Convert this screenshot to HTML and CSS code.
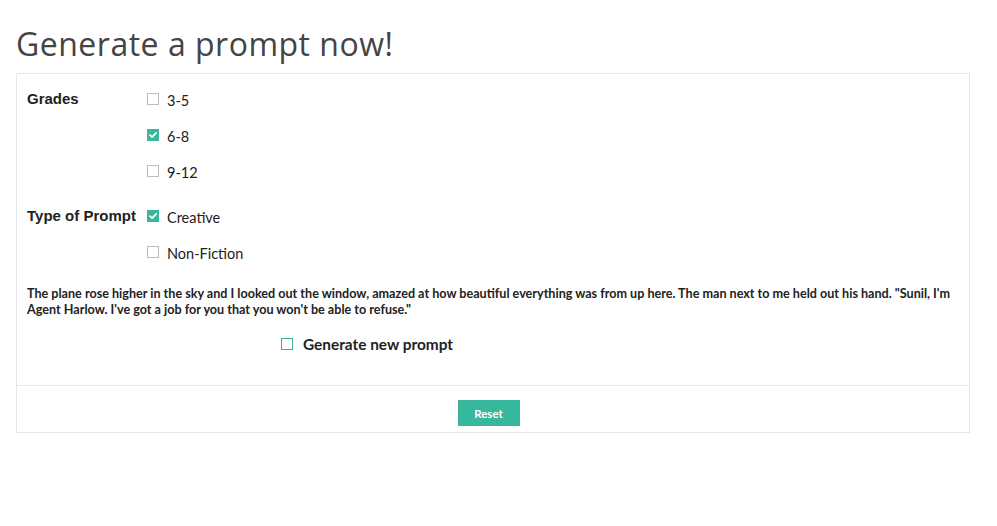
FILE: index.html
```html
<!DOCTYPE html>
<html>
<head>
<meta charset="utf-8">
<link rel="stylesheet" href="styles.css">
</head>
<body>
<div class="page">
  <h1 class="title">Generate a prompt now!</h1>
  <div class="panel">
    <div class="panel-body">
      <div class="group">
        <div class="group-label">Grades</div>
        <div class="options">
          <label class="option"><span class="box"></span><span class="opt-text">3-5</span></label>
          <label class="option"><span class="box checked"><svg viewBox="0 0 12 12" width="12" height="12"><path d="M3 6.2 L5.1 8.2 L9.2 3.9" fill="none" stroke="#fff" stroke-width="1.8" stroke-linecap="round" stroke-linejoin="round"/></svg></span><span class="opt-text">6-8</span></label>
          <label class="option"><span class="box"></span><span class="opt-text">9-12</span></label>
        </div>
      </div>
      <div class="group">
        <div class="group-label">Type of Prompt</div>
        <div class="options">
          <label class="option"><span class="box checked"><svg viewBox="0 0 12 12" width="12" height="12"><path d="M3 6.2 L5.1 8.2 L9.2 3.9" fill="none" stroke="#fff" stroke-width="1.8" stroke-linecap="round" stroke-linejoin="round"/></svg></span><span class="opt-text">Creative</span></label>
          <label class="option"><span class="box"></span><span class="opt-text">Non-Fiction</span></label>
        </div>
      </div>
      <p class="prompt">The plane rose higher in the sky and I looked out the window, amazed at how beautiful everything was from up here. The man next to me held out his hand. "Sunil, I'm Agent Harlow. I've got a job for you that you won't be able to refuse."</p>
      <label class="generate"><span class="box teal"></span><span class="gen-text">Generate new prompt</span></label>
    </div>
    <div class="panel-footer">
      <button class="reset">Reset</button>
    </div>
  </div>
</div>
</body>
</html>
```

FILE: styles.css
```css
html, body {
  margin: 0;
  padding: 0;
  background: #fff;
}
.page {
  padding: 0 27px 0 16px;
}
.title {
  margin: 0;
  padding-top: 26px;
  font-family: "Open Sans", sans-serif;
  font-weight: 400;
  font-size: 32px;
  line-height: 36px;
  color: #444;
  letter-spacing: 0.5px;
  box-sizing: border-box;
  height: 73px;
}
.panel {
  border: 1px solid #e6e6e6;
  box-sizing: border-box;
  height: 360px;
  display: flex;
  flex-direction: column;
}
.panel-body {
  padding: 7px 11px 0 10px;
  height: 312px;
  box-sizing: border-box;
  border-bottom: 1px solid #e6e6e6;
}
.group {
  display: flex;
  margin-bottom: 9px;
}
.group-label {
  width: 120px;
  font-family: "Liberation Sans", Arial, sans-serif;
  font-weight: bold;
  font-size: 15px;
  line-height: 36px;
  color: #222;
}
.options {
  display: flex;
  flex-direction: column;
}
.option {
  display: flex;
  align-items: center;
  height: 36px;
}
.box {
  width: 12px;
  height: 12px;
  box-sizing: border-box;
  border: 1px solid #bdbdbd;
  background: #fff;
  display: inline-block;
  flex: none;
}
.box.checked {
  background: #37b89d;
  border-color: #37b89d;
}
.box.checked svg {
  display: block;
  margin: -1px;
}
.box.teal {
  border-color: #37b89d;
}
.opt-text {
  margin-left: 8px;
  font-family: "Lato", sans-serif;
  font-size: 14.5px;
  color: #222;
  margin-top: 2px;
}
.prompt {
  margin: 16px 0 0 0;
  font-family: "Lato", sans-serif;
  font-weight: bold;
  font-size: 12.6px;
  line-height: 16px;
  color: #222;
}
.generate {
  display: flex;
  align-items: center;
  margin: 16px 0 0 254px;
  height: 20px;
}
.gen-text {
  margin-left: 10px;
  font-family: "Lato", sans-serif;
  font-weight: bold;
  font-size: 15.4px;
  color: #222;
}
.panel-footer {
  flex: 1;
  display: flex;
  justify-content: center;
  align-items: flex-start;
  padding-top: 14px;
  padding-right: 9px;
}
.reset {
  width: 62px;
  height: 26px;
  background: #37b89d;
  border: 1px dotted #888;
  color: #fff;
  font-family: "Lato", sans-serif;
  font-weight: bold;
  font-size: 11.5px;
  padding: 0;
  margin: 0;
}
```
